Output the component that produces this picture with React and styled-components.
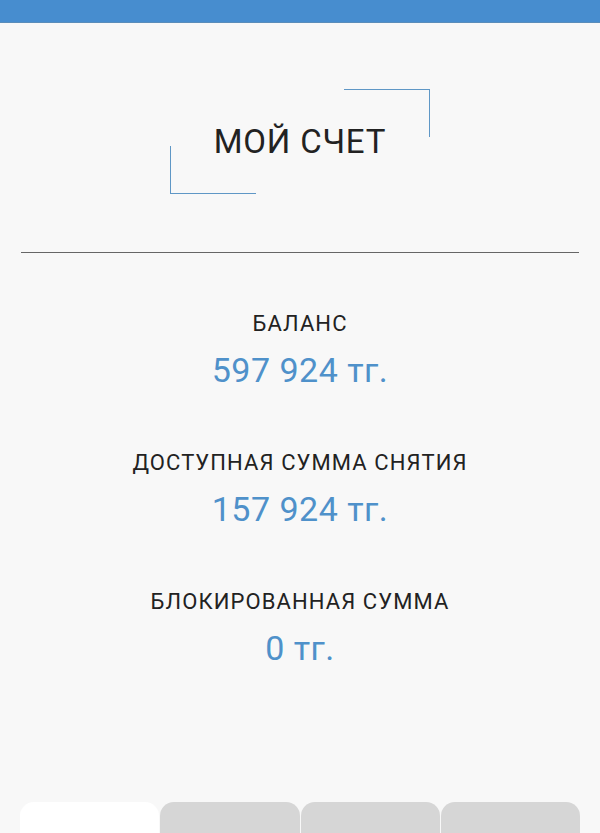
import React from "react";
import styled, { createGlobalStyle } from "styled-components";

const Global = createGlobalStyle`
  html, body { margin: 0; padding: 0; background: #f8f8f8; }
  body { font-family: Roboto, "Liberation Sans", sans-serif; -webkit-font-smoothing: antialiased; }
  * { box-sizing: border-box; }
`;

const Page = styled.div`
  height: 833px;
  overflow: hidden;
  display: flex;
  flex-direction: column;
  background: #f8f8f8;
`;

const TopBar = styled.div`
  height: 23px;
  flex: none;
  background: #478dcf;
  border-bottom: 1px solid #5a8dba;
`;

const TitleFrame = styled.div`
  position: relative;
  align-self: center;
  width: 260px;
  height: 105px;
  margin-top: 66px;
  display: flex;
  align-items: center;
  justify-content: center;

  &::before,
  &::after {
    content: "";
    position: absolute;
    width: 85px;
    height: 47px;
    border-color: #5f97c6;
    border-style: solid;
    border-width: 0;
  }
  &::before {
    top: 0;
    right: 0;
    border-top-width: 1.5px;
    border-right-width: 1.5px;
  }
  &::after {
    bottom: 0;
    left: 0;
    border-bottom-width: 1.5px;
    border-left-width: 1.5px;
  }
`;

const Title = styled.h1`
  margin: 0;
  font-size: 33px;
  font-weight: 400;
  color: #222;
  letter-spacing: 0.8px;
  line-height: 1;
`;

const Divider = styled.hr`
  margin: 58px 21px 0;
  border: 0;
  border-top: 1px solid #666;
  height: 0;
`;

const List = styled.div`
  display: flex;
  flex-direction: column;
  align-items: center;
  gap: 61px;
  padding-top: 58px;
`;

const Item = styled.div`
  display: flex;
  flex-direction: column;
  align-items: center;
  gap: 14px;
`;

const Label = styled.div`
  font-size: 22px;
  color: #222;
  line-height: 26px;
  letter-spacing: 1.1px;
`;

const Value = styled.div`
  font-size: 34px;
  color: #4f91ca;
  line-height: 38px;
  letter-spacing: 0.5px;
`;

const TabBar = styled.div`
  margin: auto 20px 0;
  display: flex;
  gap: 1px;
  height: 31px;
`;

const Tab = styled.div`
  flex: 1;
  border-radius: 14px 14px 0 0;
  background: ${(p) => (p.$active ? "#ffffff" : "#d6d6d6")};
`;

const items = [
  { label: "БАЛАНС", value: "597 924 тг." },
  { label: "ДОСТУПНАЯ СУММА СНЯТИЯ", value: "157 924 тг." },
  { label: "БЛОКИРОВАННАЯ СУММА", value: "0 тг." },
];

export default function App() {
  return (
    <>
      <Global />
      <Page>
        <TopBar />
        <TitleFrame>
          <Title>МОЙ СЧЕТ</Title>
        </TitleFrame>
        <Divider />
        <List>
          {items.map((it) => (
            <Item key={it.label}>
              <Label>{it.label}</Label>
              <Value>{it.value}</Value>
            </Item>
          ))}
        </List>
        <TabBar>
          <Tab $active />
          <Tab />
          <Tab />
          <Tab />
        </TabBar>
      </Page>
    </>
  );
}
